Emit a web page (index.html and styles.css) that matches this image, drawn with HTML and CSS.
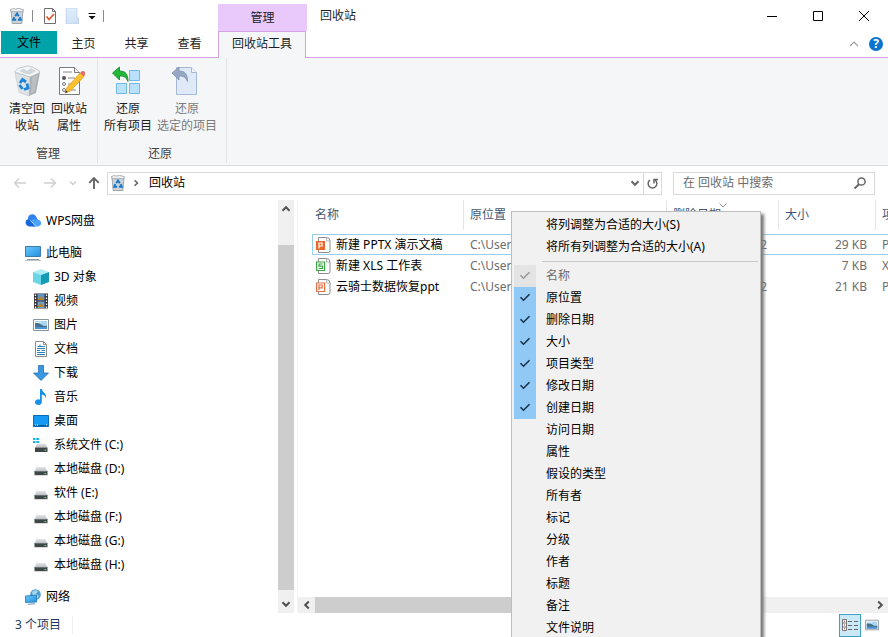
FILE: index.html
```html
<!DOCTYPE html>
<html lang="zh-CN">
<head>
<meta charset="utf-8">
<title>回收站</title>
<link rel="stylesheet" href="styles.css">
</head>
<body>
<svg class="defs" aria-hidden="true">
  <defs>
    <linearGradient id="gBlue" x1="0" y1="0" x2="1" y2="1"><stop offset="0" stop-color="#6cc9fb"/><stop offset="1" stop-color="#2190e0"/></linearGradient>
    <linearGradient id="gPaper" x1="0" y1="0" x2="0" y2="1"><stop offset="0" stop-color="#dfedfb"/><stop offset="1" stop-color="#cfe2f7"/></linearGradient>
    <linearGradient id="gDrive" x1="0" y1="0" x2="0" y2="1"><stop offset="0" stop-color="#e4e6e8"/><stop offset="1" stop-color="#b9bdc0"/></linearGradient>
    <symbol id="bin" viewBox="0 0 16 16">
      <path d="M2 2.500h12l-1.200 13H3.200z" fill="#cdd3d8" stroke="#8f979d" stroke-width=".8"/>
      <path d="M1.500 1.500l3-1 2 .6 3-.8 3 .8 2 .6-.6 2H2z" fill="#eceff0" stroke="#8f979d" stroke-width=".7"/>
      <path d="M6.200 8.200L8 5.500l1.800 2.700M10.700 9.200l1.200 2.600H8.900M7.200 11.800H4.200l1.100-2.600" fill="none" stroke="#1878c8" stroke-width="1.900"/>
    </symbol>
    <symbol id="drive" viewBox="0 0 16 16">
      <path d="M3.500 6h9L14.500 10.500h-13z" fill="url(#gDrive)"/>
      <path d="M1.500 10h13v4.200h-13z" fill="#3f4648"/><path d="M1.500 10h13v.8h-13z" fill="#747a7c"/>
      <path d="M11.500 12h1.600v1.200h-1.600z" fill="#65dd67"/>
    </symbol>
    <symbol id="check" viewBox="0 0 16 16"><path d="M3.500 7.200l3 3 6-6" fill="none" stroke="currentColor" stroke-width="1.600"/></symbol>
    <symbol id="up" viewBox="0 0 10 10"><path d="M1.500 6.800L5 3.200l3.500 3.600" fill="none" stroke="currentColor" stroke-width="2"/></symbol>
    <symbol id="down" viewBox="0 0 10 10"><path d="M1.500 3.200L5 6.800l3.500-3.600" fill="none" stroke="currentColor" stroke-width="2"/></symbol>
    <symbol id="left" viewBox="0 0 10 10"><path d="M6.800 1.500L3.200 5l3.600 3.500" fill="none" stroke="currentColor" stroke-width="2"/></symbol>
    <symbol id="right" viewBox="0 0 10 10"><path d="M3.200 1.500L6.800 5 3.200 8.500" fill="none" stroke="currentColor" stroke-width="2"/></symbol>
    <symbol id="photo" viewBox="0 0 16 16">
      <path d="M.5 2.500h15v11H.5z" fill="#fff" stroke="#8b9399"/>
      <path d="M2 4h12v8H2z" fill="#a9d5f5"/><path d="M2 6.500c3-1 5 0 7 1.500s4 .8 5 .5V12H2z" fill="#47728c"/>
      <path d="M2 10c4-1 8 .6 12-.3V12H2z" fill="#4b91d6"/><path d="M3 5h5v1H3z" fill="#e6f4fd"/>
    </symbol>
    <symbol id="sheet" viewBox="0 0 16 16">
      <path d="M2.500.5h8q3.500 0 3.500 3.500v9.500q0 2-2 2H2.500z" fill="#fff" stroke="#8d8d8d"/><path d="M10.500.5v3.500H14" fill="none" stroke="#a5a5a5" stroke-width=".8"/>
    </symbol>
  </defs>
</svg>

<div class="window">
  <header class="top">
    <div class="quick">
      <svg class="i16"><use href="#bin"/></svg>
      <span class="bar first"></span>
      <button aria-label="属性"><svg class="i16" viewBox="0 0 16 16"><path d="M2.500.5h8l3 3v12h-11z" fill="#fff" stroke="#6d6d6d"/><path d="M10.500.5v3h3" fill="none" stroke="#6d6d6d"/><path d="M4.500 8.500l2.600 3L12 6" fill="none" stroke="#e2572b" stroke-width="1.800"/></svg></button>
      <button aria-label="新建文件夹"><svg class="i16" viewBox="0 0 16 16"><path d="M1 0h11v16H1z" fill="url(#gPaper)" stroke="#b5cae4" stroke-width=".6"/><path d="M12 10h1.500v6H10" fill="#cddff4" stroke="#b5cae4" stroke-width=".6"/></svg></button>
      <button class="more" aria-label="自定义快速访问工具栏"><svg viewBox="0 0 8 8"><path d="M.5 1.500h7" stroke="#111"/><path d="M.5 4h7L4 7.500z" fill="#111"/></svg></button>
      <span class="bar"></span>
    </div>
    <div class="context">管理</div>
    <h1>回收站</h1>
    <div class="controls">
      <button aria-label="最小化"><svg viewBox="0 0 10 10"><path d="M0 5.500h10" stroke="#000"/></svg></button>
      <button aria-label="最大化"><svg viewBox="0 0 10 10"><path d="M.5.5h9v9h-9z" fill="none" stroke="#000"/></svg></button>
      <button aria-label="关闭"><svg viewBox="0 0 10 10"><path d="M0 0l10 10M10 0L0 10" stroke="#000"/></svg></button>
    </div>
  </header>

  <nav class="tabs">
    <button class="file">文件</button>
    <button>主页</button>
    <button>共享</button>
    <button>查看</button>
    <button class="active">回收站工具</button>
    <div class="help">
      <button aria-label="折叠功能区"><svg class="i10" viewBox="0 0 10 10"><path d="M1 7l4-4 4 4" fill="none" stroke="#a0a0a0" stroke-width="1.200"/></svg></button>
      <button class="q" aria-label="帮助">?</button>
    </div>
  </nav>

  <section class="ribbon">
    <div class="group">
      <div class="tools">
        <button>
          <svg viewBox="0 0 32 32"><path d="M4 8l15 3-1 20L8 27.500z" fill="#dde2e5" stroke="#c3c9cd" stroke-width=".6"/><path d="M19 11l10-4-4 21-7 3z" fill="#a9afb4"/><path d="M21 12l6-2.500-3.500 17-3.500 2z" fill="#b9bfc3"/><path d="M3.500 7l4-4 5-1 4-1 5 1 7 4-.5 2-9 4z" fill="#f4f6f7" stroke="#b5bcc1" stroke-width=".8"/><path d="M8 6l5-2.500 3 2.500 4-3 5 3-6 3.500-5-1z" fill="#d0d6da"/><path d="M9 18l2.500-3.500 3.500 2.500M16 18.500l1 4.500-4 1.500M11.500 24L8.500 20" fill="none" stroke="#1b84d8" stroke-width="2.800"/></svg>
          <span>清空回<br>收站</span>
        </button>
        <button>
          <svg viewBox="0 0 32 32"><path d="M6.500 2.500h15l5 5v22h-20z" fill="#fff" stroke="#7b7b7b"/><path d="M21.500 2.500v5h5" fill="#eee" stroke="#7b7b7b"/><circle cx="11" cy="13" r="2" fill="#555"/><circle cx="11" cy="19" r="1.500" fill="#fff" stroke="#777"/><circle cx="11" cy="25" r="1.500" fill="#fff" stroke="#777"/><path d="M10 7h9M15 13h7M15 19h4M18 25h5" stroke="#888"/><path d="M12 28l2-5.500L27 8l4 3.500L17.500 26z" fill="#fbc02f" stroke="#d99213" stroke-width=".7"/><path d="M27 8l2-2q2-.5 3 1t-.5 3.500l-.5 1z" fill="#e2716d"/><path d="M12 28l1-2.500 1.800 1.500z" fill="#333"/></svg>
          <span>回收站<br>属性</span>
        </button>
      </div>
      <div class="caption">管理</div>
    </div>
    <div class="group wide">
      <div class="tools">
        <button>
          <svg viewBox="0 0 32 32"><g fill="#b9e1fb" stroke="#73b9e5"><path d="M17.500 5.500h10v10h-10zM4.500 18.500h10v10h-10zM17.500 18.500h10v10h-10z"/></g><path d="M.5 8l7-6v4c6 0 8.500 3 8.500 10.500-2-4.500-4-5.500-8.500-5.500v4z" fill="#22b83a" stroke="#12842a" stroke-width=".8"/></svg>
          <span>还原<br>所有项目</span>
        </button>
        <button disabled>
          <svg viewBox="0 0 32 32"><path d="M5.500 2.500h15l5 5v22h-20z" fill="#dfe9f8" stroke="#a6b9d4"/><path d="M20.500 2.500v5h5" fill="#f2f7fd" stroke="#a6b9d4"/><path d="M1 8l7-6v4c6 0 8.500 3 8.500 10.500-2-4.500-4-5.500-8.500-5.500v4z" fill="#97a8c2" stroke="#8193ae" stroke-width=".8"/></svg>
          <span>还原<br>选定的项目</span>
        </button>
      </div>
      <div class="caption">还原</div>
    </div>
  </section>

  <div class="address">
    <div class="history">
      <button aria-label="后退"><svg viewBox="0 0 14 14"><path d="M1.500 7H13M6 2.500L1.500 7 6 11.500" fill="none" stroke="#d0d0d0" stroke-width="1.400"/></svg></button>
      <button aria-label="前进"><svg viewBox="0 0 14 14"><path d="M1 7h11.500M8 2.500L12.500 7 8 11.500" fill="none" stroke="#d0d0d0" stroke-width="1.400"/></svg></button>
      <button class="recent" aria-label="最近"><svg viewBox="0 0 14 14"><path d="M4 5.500l3 3 3-3" fill="none" stroke="#ccc" stroke-width="1.400"/></svg></button>
      <button aria-label="向上"><svg viewBox="0 0 14 14"><path d="M7 13V2M2.200 6.800L7 2l4.800 4.800" fill="none" stroke="#666" stroke-width="1.900"/></svg></button>
    </div>
    <div class="path">
      <svg class="i16"><use href="#bin"/></svg>
      <svg class="i10 crumb"><use href="#right"/></svg>
      <button class="place">回收站</button>
      <button class="drop" aria-label="以前的位置"><svg class="i10"><use href="#down"/></svg></button>
      <button class="refresh" aria-label="刷新"><svg viewBox="0 0 14 14"><path d="M9.800 3.300a4.700 4.700 0 1 1-5.600 0M8.600 7V2.600H13" fill="none" stroke="#666" stroke-width="1.600"/></svg></button>
    </div>
    <label class="search">
      <input type="text" aria-label="搜索" placeholder="在 回收站 中搜索">
      <svg viewBox="0 0 14 14"><circle cx="8.500" cy="5.500" r="3.600" fill="none" stroke="#666" stroke-width="1.500"/><path d="M6 8.200L1.500 12.500" stroke="#666" stroke-width="2"/></svg>
    </label>
  </div>

  <main>
    <aside>
      <ul class="tree">
        <li class="root"><svg class="i16" viewBox="0 0 16 16"><path d="M4 11.500A3.500 3.500 0 0 1 3 6a4.300 4.300 0 0 1 8-2.500L13 7 7 11.500z" fill="#2f83ee"/><path d="M6 8q2-3 5-1.500 4-.5 5 2.500t-3 4.500H8.500Q5 13 6 8z" fill="#4aa2fb"/><path d="M1 7.500q2-2 4.500 0l5.500 6H4Q-.5 12 1 7.500z" fill="#1767da"/><path d="M5.500 7.500l5.500 6" stroke="#fff" stroke-width=".7"/></svg><a href="#">WPS网盘</a></li>
        <li class="root"><svg class="i16" viewBox="0 0 16 16"><path d="M.5 1.500h15v10H.5z" fill="url(#gBlue)" stroke="#3f7ba6"/><path d="M2 14.500h12" stroke="#8b99a3"/><path d="M0 15.500h16" stroke="#c0c7cc"/></svg><a href="#">此电脑</a></li>
        <li><svg class="i16" viewBox="0 0 16 16"><path d="M0 3l8-3 8 3-8 3z" fill="#b0ecf4"/><path d="M0 3l8 3v10l-8-3z" fill="#6ad6e6"/><path d="M8 6l8-3v10l-8 3z" fill="#169bb5"/></svg><a href="#">3D 对象</a></li>
        <li><svg class="i16" viewBox="0 0 16 16"><path d="M1 .5h14v15H1z" fill="#333"/><path d="M4.500 1h7v6.500h-7z" fill="#5c91cb"/><path d="M4.500 8.500h7V15h-7z" fill="#719fcf"/><path d="M5 6l3-3 3.500 4H5zM5 13l3-3 3.500 4H5z" fill="#b3852b"/><path d="M2.500 1.500v14M13.500 1.500v14" stroke="#fff" stroke-width="1.300" stroke-dasharray="1.500 1.500"/></svg><a href="#">视频</a></li>
        <li><svg class="i16"><use href="#photo"/></svg><a href="#">图片</a></li>
        <li><svg class="i16" viewBox="0 0 16 16"><path d="M2.500.5h8l3 3v12h-11z" fill="#fff" stroke="#8b8b8b"/><path d="M10.500.5v3h3" fill="none" stroke="#8b8b8b"/><path d="M4 7.500h8M4 9.500h3M8.500 9.500H12M4 11.500h8M4 13.500h8M7 3.500v2M4.500 5.500H12" stroke="#2b82b9"/></svg><a href="#">文档</a></li>
        <li><svg class="i16" viewBox="0 0 16 16"><path d="M5.500.5h5v7.500h5L8 15.500.5 8h5z" fill="#3b97e0" stroke="#246fb0" stroke-width=".8"/></svg><a href="#">下载</a></li>
        <li><svg class="i16" viewBox="0 0 16 16"><path d="M7 0h1.800c.3 3 5.400 4.500 4 9-.6-2.500-2-3-4-3.500v7.500a3.400 2.800 0 1 1-1.800-2.300z" fill="#168fe5"/></svg><a href="#">音乐</a></li>
        <li><svg class="i16" viewBox="0 0 16 16"><path d="M.5 2.500h15v11H.5z" fill="#129af5" stroke="#096db5"/><path d="M1 12.500h14" stroke="#075b9b"/><path d="M2 12h1M4 12h1M13 12h1" stroke="#fff"/></svg><a href="#">桌面</a></li>
        <li><svg class="i16" viewBox="0 0 16 16"><path d="M4.500 6.500h8l2 4H2z" fill="url(#gDrive)"/><path d="M2 10.500h12.500V15H2z" fill="#3f4648"/><path d="M11.500 12.500h1.600v1.200h-1.600z" fill="#65dd67"/><path d="M0 1h2.500v2H0zM3.300 1h2.700v2H3.300zM0 4h2.500v2H0zM3.300 4h2.700v2H3.300z" fill="#16b3e6"/></svg><a href="#">系统文件 (C:)</a></li>
        <li><svg class="i16"><use href="#drive"/></svg><a href="#">本地磁盘 (D:)</a></li>
        <li><svg class="i16"><use href="#drive"/></svg><a href="#">软件 (E:)</a></li>
        <li><svg class="i16"><use href="#drive"/></svg><a href="#">本地磁盘 (F:)</a></li>
        <li><svg class="i16"><use href="#drive"/></svg><a href="#">本地磁盘 (G:)</a></li>
        <li><svg class="i16"><use href="#drive"/></svg><a href="#">本地磁盘 (H:)</a></li>
        <li class="root"><svg class="i16" viewBox="0 0 16 16"><circle cx="10.500" cy="5.500" r="5.300" fill="#4c9dce"/><path d="M7 3q3-3 6-1l-2 3 3 2-2 3q-2-2-4-2z" fill="#a9d6ee"/><path d="M.5 7l11-1v7l-11 .5z" fill="url(#gBlue)" stroke="#2275b5" stroke-width=".8"/><path d="M3 15.300l7-.6" stroke="#6a95b2"/></svg><a href="#">网络</a></li>
      </ul>
      <div class="vscroll">
        <button aria-label="向上滚动"><svg class="i10"><use href="#up"/></svg></button>
        <div class="lead"></div><div class="thumb"></div>
        <button aria-label="向下滚动"><svg class="i10"><use href="#down"/></svg></button>
      </div>
    </aside>

    <section class="files">
      <div class="list">
        <table>
          <colgroup><col class="c-name"><col class="c-place"><col class="c-date"><col class="c-size"><col></colgroup>
          <thead><tr><th>名称</th><th>原位置</th><th class="sorted">删除日期<svg class="i10" viewBox="0 0 10 10"><path d="M1.500 3.500L5 7l3.500-3.500" fill="none" stroke="#8b8b8b"/></svg></th><th>大小</th><th>项目类型</th></tr></thead>
          <tbody>
            <tr class="focus"><td><div class="name"><svg class="i16" viewBox="0 0 16 16"><use href="#sheet"/><path d="M0 4h9v9H0z" fill="#e9672d"/><path d="M3 11.500V6h3v3H3" fill="none" stroke="#fff" stroke-width="1.200"/></svg>新建 PPTX 演示文稿</div></td><td>C:\User</td><td>2</td><td>29 KB</td><td>PPTX 演示文稿</td></tr>
            <tr><td><div class="name"><svg class="i16" viewBox="0 0 16 16"><use href="#sheet"/><path d="M.6 4h8v8.500h-8z" fill="#fff" stroke="#3aa545" stroke-width="1.200"/><path d="M6.700 6H3v2.200h3.500v2.300H2.700" fill="none" stroke="#3aa545" stroke-width="1.200"/></svg>新建 XLS 工作表</div></td><td>C:\User</td><td></td><td>7 KB</td><td>XLS 工作表</td></tr>
            <tr><td><div class="name"><svg class="i16" viewBox="0 0 16 16"><use href="#sheet"/><path d="M.6 4h8v8.500h-8z" fill="#fff" stroke="#df7145" stroke-width="1.200"/><path d="M3 11V6h3.200v2.800H3" fill="none" stroke="#df7145" stroke-width="1.200"/></svg>云骑士数据恢复ppt</div></td><td>C:\User</td><td>2</td><td>21 KB</td><td>PPT 演示文稿</td></tr>
          </tbody>
        </table>
      </div>
      <div class="hscroll">
        <button aria-label="向左滚动"><svg class="i10"><use href="#left"/></svg></button>
        <div class="thumb"></div><div class="track"></div>
        <button aria-label="向右滚动"><svg class="i10"><use href="#right"/></svg></button>
      </div>
    </section>
  </main>

  <footer>
    <span class="count">3 个项目</span>
    <div class="views">
      <button class="on" aria-label="详细信息"><svg viewBox="0 0 16 14"><path d="M.5 1.500h4v11h-4zM.5 5h4M.5 9h4" fill="#fff" stroke="#777"/><path d="M2 3.200h1M2 7h1M2 10.800h1" stroke="#933"/><path d="M6 3.500h4M12 3.500h4M6 7.500h4M12 7.500h4M6 11.500h4M12 11.500h4" stroke="#666"/></svg></button>
      <button aria-label="大图标"><svg viewBox="0 0 16 16"><use href="#photo"/></svg></button>
    </div>
  </footer>

  <div class="menu" role="menu">
    <button role="menuitem"><i></i>将列调整为合适的大小(S)</button>
    <button role="menuitem"><i></i>将所有列调整为合适的大小(A)</button>
    <hr>
    <button role="menuitemcheckbox" aria-checked="true" disabled><i><svg class="i16"><use href="#check"/></svg></i>名称</button>
    <button role="menuitemcheckbox" aria-checked="true"><i><svg class="i16"><use href="#check"/></svg></i>原位置</button>
    <button role="menuitemcheckbox" aria-checked="true"><i><svg class="i16"><use href="#check"/></svg></i>删除日期</button>
    <button role="menuitemcheckbox" aria-checked="true"><i><svg class="i16"><use href="#check"/></svg></i>大小</button>
    <button role="menuitemcheckbox" aria-checked="true"><i><svg class="i16"><use href="#check"/></svg></i>项目类型</button>
    <button role="menuitemcheckbox" aria-checked="true"><i><svg class="i16"><use href="#check"/></svg></i>修改日期</button>
    <button role="menuitemcheckbox" aria-checked="true"><i><svg class="i16"><use href="#check"/></svg></i>创建日期</button>
    <button role="menuitemcheckbox" aria-checked="false"><i></i>访问日期</button>
    <button role="menuitemcheckbox" aria-checked="false"><i></i>属性</button>
    <button role="menuitemcheckbox" aria-checked="false"><i></i>假设的类型</button>
    <button role="menuitemcheckbox" aria-checked="false"><i></i>所有者</button>
    <button role="menuitemcheckbox" aria-checked="false"><i></i>标记</button>
    <button role="menuitemcheckbox" aria-checked="false"><i></i>分级</button>
    <button role="menuitemcheckbox" aria-checked="false"><i></i>作者</button>
    <button role="menuitemcheckbox" aria-checked="false"><i></i>标题</button>
    <button role="menuitemcheckbox" aria-checked="false"><i></i>备注</button>
    <button role="menuitemcheckbox" aria-checked="false"><i></i>文件说明</button>
  </div>
</div>
</body>
</html>
```

FILE: styles.css
```css
* { box-sizing: border-box; }

body {
  margin: 0;
  font: 12px/18px "Noto Sans", "Noto Sans CJK SC", sans-serif;
  color: #1e1e1e;
  background: #fff;
}

button {
  display: flex;
  align-items: center;
  justify-content: center;
  margin: 0;
  padding: 0;
  border: 0;
  background: none;
  font: inherit;
  color: inherit;
}

svg { display: block; flex: none; }
a { color: inherit; text-decoration: none; }
ul { margin: 0; padding: 0; list-style: none; }

.defs { position: absolute; width: 0; height: 0; }
.i16 { width: 16px; height: 16px; }
.i10 { width: 10px; height: 10px; }

.window {
  position: relative;
  display: flex;
  flex-direction: column;
  height: 100vh;
  overflow: hidden;
}

/* Title bar */
.top { display: flex; flex: none; height: 31px; }

.quick {
  display: flex;
  align-items: center;
  gap: 7px;
  width: 218px;
  padding-left: 9px;
}
.quick .bar { width: 1px; height: 12px; background: #8a8a8a; }
.quick .first { margin-right: 2px; }
.quick .more svg { width: 8px; height: 8px; }

.context {
  width: 89px;
  margin-top: 4px;
  background: #e9c9fb;
  line-height: 27px;
  text-align: center;
}

h1 {
  flex: 1;
  margin: 0;
  padding-left: 13px;
  font-size: 12px;
  font-weight: 400;
  line-height: 32px;
}

.controls { display: flex; padding-right: 1px; }
.controls button { width: 46px; }
.controls svg { width: 10px; height: 10px; }

/* Ribbon tabs */
.tabs {
  display: flex;
  flex: none;
  height: 27px;
  padding-left: 1px;
  border-bottom: 1px solid #d3a3e3;
}
.tabs > button { width: 53px; height: 26px; }
.tabs .file { width: 56px; height: 23px; background: #00a3a9; color: #000; }
.tabs .active {
  width: 88px;
  height: 27px;
  margin-left: 2px;
  padding-bottom: 2px;
  border: 1px solid #d3a3e3;
  border-bottom: 0;
  background: #f5f6f7;
}
.help { display: flex; align-items: center; gap: 10px; margin-left: auto; padding-right: 5px; }
.help .q {
  width: 14px;
  height: 14px;
  border-radius: 50%;
  background: #0a74cf;
  color: #fff;
  font-weight: 700;
  line-height: 14px;
}

/* Ribbon */
.ribbon {
  display: flex;
  flex: none;
  height: 108px;
  border-bottom: 1px solid #dadbdc;
  background: #f5f6f7;
}
.group {
  display: flex;
  flex-direction: column;
  justify-content: space-between;
  margin-bottom: 2px;
  padding: 7px 7px 0 6px;
  border-right: 1px solid #e2e3e4;
}
.group.wide { padding: 7px 7px 0 3px; }
.tools { display: flex; }
.tools button { flex-direction: column; min-width: 42px; padding: 0 3px; line-height: 17px; }
.group.wide button { padding: 0 2px; min-width: 54px; }
.tools svg { width: 32px; height: 32px; margin-bottom: 3px; }
.tools button:disabled { color: #7b7b7b; }
.caption { text-align: center; line-height: 18px; color: #444; }

/* Address bar */
.address {
  display: flex;
  flex: none;
  align-items: center;
  height: 34px;
  padding: 0 13px;
}
.history { display: flex; align-items: center; width: 94px; }
.history button { flex: none; justify-content: flex-start; width: 30px; height: 24px; }
.history .recent { width: 14px; }
.history button:last-child { width: 20px; }
.history button:last-child svg { margin: 0 auto 0 0; }
.history svg { width: 14px; height: 14px; }
.history .recent { margin-left: -7px; margin-right: 7px; }

.path {
  display: flex;
  flex: 1;
  align-items: center;
  height: 23px;
  padding-left: 2px;
  border: 1px solid #d9d9d9;
  color: #666;
}
.path .crumb { width: 8px; height: 8px; margin: 0 9px 0 6px; }
.path .place { color: #000; }
.path .drop { width: 16px; margin-left: auto; }
.path .refresh { width: 18px; height: 21px; border-left: 1px solid #d9d9d9; }
.path .refresh svg { width: 13px; height: 13px; }

.search {
  display: flex;
  align-items: center;
  width: 202px;
  height: 23px;
  margin-left: 11px;
  padding: 0 7px 0 9px;
  border: 1px solid #d9d9d9;
}
.search input {
  flex: 1;
  min-width: 0;
  padding: 0;
  border: 0;
  outline: 0;
  background: none;
  font: inherit;
}
.search input::placeholder { color: #6d6d6d; opacity: 1; }
.search svg { width: 14px; height: 14px; }

/* Folder tree */
main { display: flex; flex: 1; min-height: 0; }

aside {
  display: flex;
  flex: none;
  width: 298px;
  padding-right: 3px;
  border-right: 1px solid #f5f5f5;
}
.tree { flex: 1; padding-top: 9px; color: #000; }
.tree li {
  display: flex;
  align-items: center;
  gap: 5px;
  height: 24px;
  padding-left: 33px;
}
.tree .root { padding-left: 25px; }
.tree li + .root { margin-top: 8px; }

.vscroll { display: flex; flex-direction: column; width: 16px; background: #f0f0f0; color: #505050; }
.vscroll button { height: 18px; }
.vscroll .lead { height: 27px; }
.vscroll .thumb { flex: 1; margin-bottom: 5px; }
.thumb { background: #cdcdcd; }

/* File list */
.files { display: flex; flex: 1; flex-direction: column; min-width: 0; }
.list { flex: 1; overflow: hidden; padding-left: 14px; }

table { width: 680px; border-spacing: 0; table-layout: fixed; }
.c-name { width: 151px; }
.c-place { width: 203px; }
.c-date { width: 112px; }
.c-size { width: 97px; }

th {
  position: relative;
  height: 30px;
  padding: 0 0 0 6px;
  border-left: 1px solid #e5e5e5;
  font-weight: 400;
  color: #43586f;
  text-align: left;
}
th:first-child { padding-left: 3px; border-left: 0; }
th.sorted svg { position: absolute; top: 0; left: calc(50% - 5px); }
thead::after { content: ""; display: block; height: 4px; }

td {
  height: 21px;
  padding: 0 0 0 7px;
  border: 1px solid transparent;
  border-width: 1px 0;
  color: #6d6d6d;
  line-height: 19px;
  white-space: nowrap;
}
td:first-child { padding-left: 3px; border-left-width: 1px; color: #000; }
td:nth-child(3) { padding-right: 11px; text-align: right; }
td:nth-child(4) { padding-right: 8px; text-align: right; }
.focus td { border-color: #99cdec; }
.name { display: flex; align-items: center; gap: 4px; }

.hscroll { display: flex; height: 16px; background: #f0f0f0; color: #505050; }
.hscroll button { width: 17px; }
.hscroll .thumb { flex: 3; }
.hscroll .track { flex: 1; }

/* Status bar */
footer {
  display: flex;
  flex: none;
  align-items: center;
  justify-content: space-between;
  height: 24px;
  padding: 0 5px 0 15px;
  color: #1e395b;
}
.count { padding-right: 11px; border-right: 1px solid #ededed; }
.views { display: flex; }
.views button { width: 22px; height: 23px; }
.views .on { border: 1px solid #3f9fc5; background: #cbe8f6; }
.views svg { width: 16px; height: 14px; }

/* Column chooser menu */
.menu {
  position: absolute;
  top: 211px;
  left: 511px;
  width: 250px;
  padding: 2px;
  border: 1px solid #bdbdbd;
  background: #f1f1f1;
  box-shadow: 3px 3px 3px #777;
  color: #000;
}
.menu button { justify-content: flex-start; gap: 10px; width: 100%; height: 22px; }
.menu i {
  display: flex;
  align-items: center;
  justify-content: center;
  width: 22px;
  height: 22px;
  color: #1d3247;
}
.menu [aria-checked="true"] i { background: #90c8f6; }
.menu button:disabled { color: #6d6d6d; }
.menu button:disabled i { background: #e4e4e4; color: #999; }
.menu hr { margin: 3px 0 3px 28px; border: 0; border-top: 1px solid #c8c8c8; }
```
